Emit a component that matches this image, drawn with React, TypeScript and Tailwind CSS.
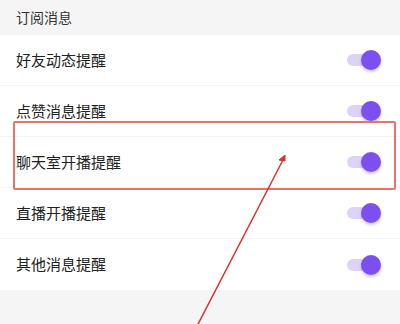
import React from "react";

const items = ["好友动态提醒", "点赞消息提醒", "聊天室开播提醒", "直播开播提醒", "其他消息提醒"];

function Toggle() {
  return (
    <div className="relative w-[34px] h-[20px] flex items-center">
      <div className="absolute left-0 w-[28px] h-[12px] rounded-full bg-[#ddd3f8]" />
      <div className="absolute right-0 w-[20px] h-[20px] rounded-full bg-[#7b50ee] shadow-[0_2px_3px_rgba(90,50,200,0.3)]" />
    </div>
  );
}

export default function App() {
  return (
    <div
      className="relative w-[400px] h-[324px] overflow-hidden bg-[#f5f5f5]"
      style={{ fontFamily: '"Noto Sans CJK SC", "Noto Sans", sans-serif' }}
    >
      <div className="h-[35px] px-4 flex items-center text-[14px] text-[#333]">订阅消息</div>
      <div className="bg-white">
        {items.map((t, i) => (
          <div
            key={t}
            className={`h-[51px] pl-4 pr-[19px] flex items-center justify-between ${i < items.length - 1 ? "border-b border-[#f4f4f4]" : ""}`}
          >
            <span className="text-[15px] text-[#222]">{t}</span>
            <Toggle />
          </div>
        ))}
      </div>
      <div className="absolute left-[13px] top-[121px] w-[383px] h-[69px] border-2 border-solid border-[#e8736d] rounded-[2px]" />
      <svg className="absolute left-0 top-0" width="400" height="324" viewBox="0 0 400 324">
        <line x1="195" y1="330" x2="284" y2="158" stroke="#d8342c" strokeWidth="1.5" />
        <path d="M285 155 L279 160 L285 161 Z" fill="#d8342c" stroke="#d8342c" strokeWidth="1" />
      </svg>
    </div>
  );
}
